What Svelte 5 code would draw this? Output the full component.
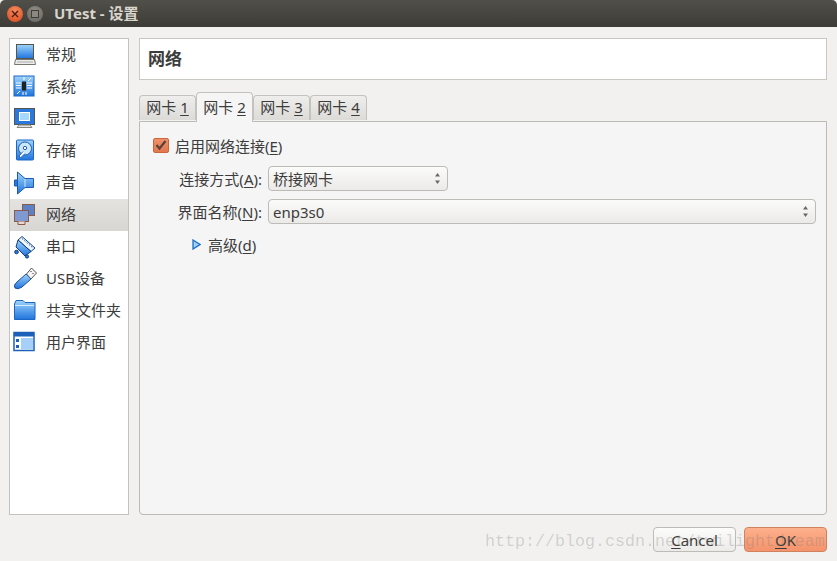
<script lang="ts">
  const PAGES = ["常规", "系统", "显示", "存储", "声音", "网络", "串口", "USB设备", "共享文件夹", "用户界面"];
  const TABS = ["1", "2", "3", "4"];

  let selectedPage = $state(5);
  let selectedTab = $state(1);
</script>

{#snippet arrows()}
  <svg class="arrows" width="7" height="15" viewBox="0 0 7 15">
    <path d="M3.5 2 L6 5.5 H1 Z" fill="#6a6864" />
    <path d="M3.5 13 L6 9.5 H1 Z" fill="#6a6864" />
  </svg>
{/snippet}

{#snippet pageIcon(i: number)}
  <svg width="24" height="24" viewBox="0 0 24 24">
    <defs>
      <linearGradient id="blue{i}" x1="0" y1="0" x2="0" y2="1">
        <stop offset="0" stop-color="#9fd4fa" />
        <stop offset="1" stop-color="#1f74de" />
      </linearGradient>
    </defs>
    {#if i === 0}
      <rect x="3.5" y="1.5" width="17" height="14" fill="url(#blue0)" stroke="#55554f" />
      <path d="M2.5 16.5 H21.5 L22.5 21.5 H1.5 Z" fill="#ececea" stroke="#77766f" />
      <path d="M4 19 H20" stroke="#aaa" />
    {:else if i === 1}
      <rect x="1" y="1" width="20" height="20" fill="url(#blue1)" stroke="#1c66c4" />
      <rect x="9" y="6.5" width="4" height="9" fill="#222" />
      <path d="M3 8 H8 M3 10.5 H8 M3 13 H8 M14 8 H19 M14 10.5 H19 M14 13 H19 M15 6 L18 3 M7 16 L4 19 M10 17 V20 M13 17 V20 M11 2 V5" stroke="#fff" />
    {:else if i === 2}
      <rect x="1.5" y="1.5" width="20" height="16" fill="#2a78dc" stroke="#55554f" />
      <rect x="6.5" y="5.5" width="10" height="8" fill="#a6d8fb" stroke="#fff" />
      <path d="M6 18 H17 L19 20.5 H4 Z" fill="#e4e4e2" stroke="#88877f" />
    {:else if i === 3}
      <rect x="3.5" y="1" width="17" height="20" rx="1" fill="url(#blue3)" stroke="#1c66c4" />
      <circle cx="12" cy="9.5" r="6.5" fill="#cbe7fb" stroke="#1d5fb0" />
      <circle cx="12" cy="9" r="1.7" fill="#fff" stroke="#1d5fb0" />
      <path d="M10 12.5 L6 17 L7.5 19 L12 14.5" fill="#fff" stroke="#1d5fb0" />
    {:else if i === 4}
      <path d="M1.5 9 H4.5 V15 H1.5 Z" fill="#2a78dc" stroke="#1c5cb0" />
      <path d="M4.5 1 L12 7.5 H20.5 V16.5 H12 L4.5 23 Z" fill="url(#blue4)" stroke="#1c5cb0" />
      <path d="M12 8 V16" stroke="#cfe8fc" />
    {:else if i === 5}
      <rect x="9.5" y="1.5" width="12" height="11" fill="#5e80c4" stroke="#8a5a4c" />
      <rect x="1.5" y="7.5" width="14" height="11" fill="#7f9ad2" stroke="#8a5a4c" />
      <path d="M5 18.5 V21.5 H12 V18.5" fill="#e8d8d0" stroke="#8a5a4c" />
    {:else if i === 6}
      <path d="M9 1.5 L22 13 L18 16.5 L5 5 Z" fill="#eef6fd" stroke="#123f80" />
      <path d="M5 5 L18 16.5 L12 21 L3 12 Z" fill="url(#blue6)" stroke="#123f80" />
      <path d="M9 3.5 L20 13" stroke="#1d5fb0" stroke-dasharray="1.5 1.5" />
      <circle cx="3.5" cy="17" r="1.8" fill="#2a78dc" stroke="#123f80" />
      <circle cx="14" cy="21.5" r="1.6" fill="#2a78dc" stroke="#123f80" />
    {:else if i === 7}
      <path d="M13 7 L18 12 L9 20 Q5 23 2 21 Q0 18 4 15 Z" fill="url(#blue7)" stroke="#174f9e" />
      <path d="M13.5 7 L18.5 1 L23.5 6 L18 12 Z" fill="#f4f4f4" stroke="#555" />
      <path d="M17.5 4.5 H18.5 M19.5 6.5 H20.5" stroke="#333" />
    {:else if i === 8}
      <path d="M1.5 5 V20.5 H22 V3.5 H12 L10 1.5 H3 Z" fill="url(#blue8)" stroke="#1c66c4" />
      <path d="M2 6.5 H21" stroke="#d5ecfc" />
    {:else}
      <rect x="1" y="1.5" width="20" height="18" fill="#fff" stroke="#1c5fb8" stroke-width="1.5" />
      <rect x="1" y="1.5" width="20" height="4" fill="#1c5fb8" />
      <rect x="8" y="7" width="12" height="11.5" fill="#a6d0fa" />
      <path d="M3 8 H6 V11 H3 Z M3 14 H6 V17 H3 Z" fill="#1c5fb8" />
    {/if}
  </svg>
{/snippet}

<div class="window">
  <header class="titlebar">
    <span class="wbtn close">
      <svg width="8" height="8" viewBox="0 0 8 8"><path d="M1 1 L7 7 M7 1 L1 7" stroke="#4a1a0a" stroke-width="1.4" /></svg>
    </span>
    <span class="wbtn restore"><span class="restore-mark"></span></span>
    <span class="title">UTest - 设置</span>
  </header>

  <div class="content">
    <nav class="sidebar">
      {#each PAGES as page, i}
        <button class="page" class:selected={i === selectedPage} onclick={() => (selectedPage = i)}>
          <span class="page-icon">{@render pageIcon(i)}</span>
          <span class="page-name">{page}</span>
        </button>
      {/each}
    </nav>

    <main class="main">
      <div class="heading"><span>网络</span></div>

      <div class="tabs">
        {#each TABS as tab, i}
          <button class="tab" class:active={i === selectedTab} onclick={() => (selectedTab = i)}>
            <span>网卡 <u>{tab}</u></span>
          </button>
        {/each}
      </div>

      <section class="panel">
        <div class="enable">
          <span class="checkbox">
            <svg width="12" height="12" viewBox="0 0 12 12"><path d="M1.5 6 L4.5 9.5 L10.5 2" fill="none" stroke="#5a4238" stroke-width="2.2" /></svg>
          </span>
          <span>启用网络连接(<u>E</u>)</span>
        </div>

        <div class="fields">
          <span class="field-label">连接方式(<u>A</u>):</span>
          <div class="combo short"><span>桥接网卡</span>{@render arrows()}</div>
          <span class="field-label">界面名称(<u>N</u>):</span>
          <div class="combo"><span>enp3s0</span>{@render arrows()}</div>
        </div>

        <div class="advanced">
          <svg width="9" height="11" viewBox="0 0 9 11"><path d="M1 1 L8 5.5 L1 10 Z" fill="#9fd0f5" stroke="#1b6fc4" stroke-width="1.3" /></svg>
          <span>高级(<u>d</u>)</span>
        </div>
      </section>
    </main>
  </div>

  <footer class="buttons">
    <button class="btn"><u>C</u>ancel</button>
    <button class="btn ok"><u>O</u>K</button>
  </footer>

  <div class="watermark">http://blog.csdn.net/twilightdream</div>
</div>

<style>
  :global(body) {
    margin: 0;
  }

  .window {
    position: relative;
    width: 837px;
    height: 561px;
    display: flex;
    flex-direction: column;
    overflow: hidden;
    background: #f2f1f0;
    color: #3c3c3c;
    font-family: "Noto Sans", "Noto Sans CJK SC", sans-serif;
    font-size: 15px;
  }

  u {
    text-underline-offset: 2px;
  }

  button {
    font: inherit;
    color: inherit;
  }

  .titlebar {
    height: 27px;
    flex-shrink: 0;
    display: flex;
    align-items: center;
    padding-left: 7px;
    background: linear-gradient(#514f49, #3d3c37);
    border-radius: 5px 5px 0 0;
  }

  .wbtn {
    width: 16px;
    height: 16px;
    border-radius: 50%;
    display: flex;
    align-items: center;
    justify-content: center;
  }

  .close {
    background: radial-gradient(circle at 50% 30%, #f58a5c, #d8481c);
    margin-right: 4px;
  }

  .restore {
    background: radial-gradient(circle at 50% 30%, #8e8c84, #67655e);
  }

  .restore-mark {
    width: 6px;
    height: 6px;
    border: 1px solid #3e3d39;
    background: #8a8880;
  }

  .title {
    margin-left: 11px;
    margin-top: -2px;
    color: #d8d5cd;
    font-size: 15px;
    font-weight: 700;
  }

  .content {
    flex: 1;
    min-height: 0;
    display: flex;
    gap: 10px;
    padding: 11px 10px 0 9px;
  }

  .sidebar {
    width: 118px;
    height: 475px;
    flex-shrink: 0;
    background: #fff;
    border: 1px solid #c4c2bd;
  }

  .page {
    width: 100%;
    height: 32px;
    display: flex;
    align-items: center;
    gap: 9px;
    padding: 0 0 0 3px;
    border: 0;
    background: none;
    text-align: left;
  }

  .page.selected {
    background: linear-gradient(#e5e3e0, #d8d6d2);
  }

  .page-name {
    margin-top: -3px;
    white-space: nowrap;
  }

  .page-icon {
    width: 24px;
    height: 24px;
    display: block;
  }

  .page-icon svg {
    display: block;
  }

  .main {
    flex: 1;
    min-width: 0;
    height: 477px;
    display: flex;
    flex-direction: column;
  }

  .heading {
    height: 40px;
    flex-shrink: 0;
    display: flex;
    align-items: center;
    padding-left: 8px;
    background: #fff;
    border: 1px solid #c9c7c2;
    font-size: 17px;
    font-weight: 700;
  }

  .heading span {
    margin-top: -3px;
  }

  .tabs {
    display: flex;
    align-items: flex-end;
    height: 29px;
    margin-top: 12px;
    flex-shrink: 0;
    position: relative;
    z-index: 1;
  }

  .tab {
    width: 57px;
    height: 25px;
    margin-bottom: 1px;
    padding: 0 0 3px;
    border: 1px solid #c4c2bd;
    border-bottom: 0;
    border-radius: 4px 4px 0 0;
    background: linear-gradient(#efeeec, #dddbd8);
    white-space: nowrap;
  }

  .tab.active {
    height: 30px;
    margin-bottom: -1px;
    background: #f5f5f5;
  }

  .panel {
    flex: 1;
    min-height: 0;
    padding: 12px 10px 0 13px;
    background: #f5f5f5;
    border: 1px solid #bcbab5;
    border-radius: 0 0 4px 4px;
  }

  .enable {
    display: flex;
    align-items: center;
    gap: 6px;
    height: 22px;
  }

  .checkbox {
    width: 14px;
    height: 13px;
    display: flex;
    align-items: center;
    justify-content: center;
    background: linear-gradient(#f0906a, #e27850);
    border: 1px solid #c8663e;
    border-radius: 2px;
  }

  .fields {
    display: grid;
    grid-template-columns: 104px 1fr;
    column-gap: 0;
    row-gap: 8px;
    align-items: center;
    margin-top: 10px;
    padding-left: 11px;
  }

  .field-label {
    text-align: right;
    padding-right: 6px;
    white-space: nowrap;
  }

  .combo {
    height: 25px;
    box-sizing: border-box;
    display: flex;
    align-items: center;
    justify-content: space-between;
    padding: 0 6px 0 4px;
    background: linear-gradient(#fbfbfa, #ebeae8);
    border: 1px solid #bdbbb6;
    border-radius: 4px;
  }

  .combo.short {
    width: 180px;
  }

  .arrows {
    flex-shrink: 0;
  }

  .advanced {
    display: flex;
    align-items: center;
    gap: 7px;
    margin: 9px 0 0 39px;
    height: 22px;
  }

  .buttons {
    height: 46px;
    flex-shrink: 0;
    display: flex;
    justify-content: flex-end;
    gap: 8px;
    padding: 12px 10px 0 0;
    box-sizing: border-box;
    margin-bottom: 0;
  }

  .btn {
    width: 83px;
    height: 25px;
    padding: 0;
    border: 1px solid #bdbbb6;
    border-radius: 4px;
    background: linear-gradient(#fcfcfb, #ecebe9);
  }

  .btn.ok {
    background: linear-gradient(#fdb08c, #f4936c);
    border-color: #d0815f;
  }

  .watermark {
    position: absolute;
    left: 485px;
    top: 532px;
    font-family: "Liberation Mono", monospace;
    font-size: 16.67px;
    color: rgba(120, 120, 115, 0.28);
    white-space: nowrap;
    pointer-events: none;
  }
</style>
